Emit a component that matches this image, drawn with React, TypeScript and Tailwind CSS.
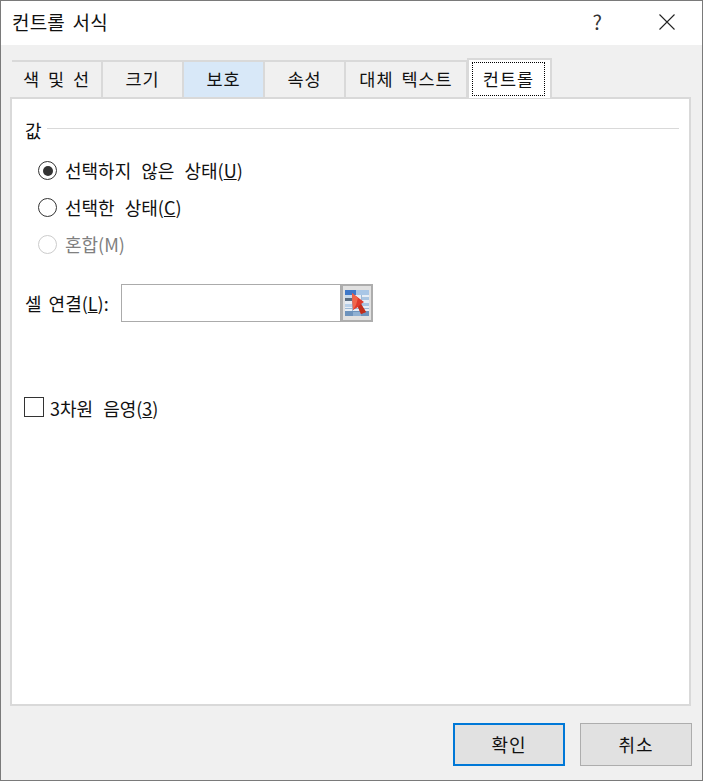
const font = { fontFamily: '"Noto Sans CJK KR", "Noto Sans", sans-serif' }

function Tab({ label, width, active }: { label: string; width: string; active?: boolean }) {
    return (
        <div className={`${width} flex h-[37px] items-center justify-center border-t-2 border-r-2 border-[#d9d9d9] tracking-[1px] [word-spacing:3px] ${active ? 'bg-[#d8e8f8]' : ''}`}>
            {label}
        </div>
    )
}

function Radio({ checked, disabled, children }: { checked?: boolean; disabled?: boolean; children: React.ReactNode }) {
    return (
        <div className={`flex h-[37px] items-center gap-[8px] pl-[26px] ${disabled ? 'text-[#808080]' : ''}`}>
            <div className={`flex size-[19px] items-center justify-center rounded-full border-[1.5px] ${disabled ? 'border-[#cccccc]' : 'border-[#333333]'}`}>
                {checked && <div className="size-[10px] rounded-full bg-[#333333]" />}
            </div>
            <span className="[word-spacing:6px]">{children}</span>
        </div>
    )
}

function CellPickerIcon() {
    return (
        <svg width="24" height="26" viewBox="0 0 24 26">
            <rect x="0" y="0" width="24" height="26" fill="#e6edf5" />
            <rect x="0" y="0" width="11" height="5" fill="#3f78c8" />
            <rect x="11" y="0" width="13" height="5" fill="#a8c6e6" />
            <rect x="0" y="5" width="7" height="3" fill="#c6d9ec" />
            <rect x="0" y="8" width="8" height="3" fill="#5a6c80" />
            <rect x="0" y="14" width="7" height="3" fill="#b8cfe8" />
            <rect x="16" y="7" width="8" height="3" fill="#a9c5e2" />
            <rect x="17" y="13" width="7" height="3" fill="#a9c5e2" />
            <rect x="7" y="5" width="1" height="21" fill="#9db8d4" />
            <rect x="16" y="5" width="1" height="21" fill="#9db8d4" />
            <rect x="0" y="18" width="24" height="1" fill="#9db8d4" />
            <rect x="0" y="21" width="24" height="5" fill="#6d93bd" />
            <rect x="8" y="22" width="8" height="4" fill="#8fb0d2" />
            <path d="M7 3 L19 12 L16 14 L21 22 L16 24 L13 17 L8 20 Z" fill="#e0392a" />
            <path d="M7 3 L13 8 L11 15 L8 20 Z" fill="#f0654a" />
            <path d="M13 17 L16 24 L21 22 L16 14 Z" fill="#bf2f1c" />
        </svg>
    )
}

export default function App() {
    return (
        <div style={font} className="flex h-[781px] w-[703px] flex-col border border-[#7a7a7a] bg-[#f0f0f0] text-[18px] text-[#111111]">
            {/* title bar */}
            <div className="flex h-[44px] shrink-0 items-center bg-white pb-[2px] pl-[11px] pr-[27px]">
                <span className="flex-1 text-[19px] tracking-[0.2px] [word-spacing:3px]">컨트롤 서식</span>
                <span className="mr-[57px] text-[20px] text-[#333333]">?</span>
                <svg width="16" height="16" viewBox="0 0 16 16" stroke="#222222" strokeWidth="1.1" fill="none">
                    <path d="M0.5 0.5 L15.5 15.5 M15.5 0.5 L0.5 15.5" />
                </svg>
            </div>

            {/* tabs */}
            <div className="relative z-10 mt-[13px] ml-[11px] flex shrink-0 items-end text-[17.5px]">
                <div className="flex">
                    <Tab label="색 및 선" width="w-[91px]" />
                    <Tab label="크기" width="w-[81px]" />
                    <Tab label="보호" width="w-[81px]" active />
                    <Tab label="속성" width="w-[81px]" />
                    <Tab label="대체 텍스트" width="w-[122px]" />
                </div>
                <div className="-ml-[1px] -mb-[1px] flex h-[40px] w-[85px] items-center border-x-2 border-t-2 border-[#d9d9d9] bg-white pl-[3px]">
                    <div className="flex h-[34px] w-[73px] items-center justify-center border border-dotted border-black tracking-[1px]">컨트롤</div>
                </div>
            </div>

            {/* panel */}
            <div className="ml-[9px] mr-[11px] flex h-[609px] shrink-0 flex-col border-2 border-[#d9d9d9] bg-white">
                <div className="mt-[18px] ml-[13px] mr-[10px] flex h-[26px] items-center gap-[5px]">
                    <span>값</span>
                    <div className="h-[1px] flex-1 -translate-y-[2px] bg-[#d9d9d9]" />
                </div>
                <div className="mt-[9px]">
                    <Radio checked>선택하지 않은 상태(<u>U</u>)</Radio>
                    <Radio>선택한 상태(<u>C</u>)</Radio>
                    <Radio disabled>혼합(M)</Radio>
                </div>
                <div className="mt-[21px] ml-[13px] flex h-[38px] items-center">
                    <span className="w-[96px] [word-spacing:3px]">셀 연결(<u>L</u>):</span>
                    <div className="h-full w-[220px] border border-[#ababab] bg-white" />
                    <div className="flex h-full w-[32px] items-center justify-center border-2 border-[#adadad] bg-[#e1e1e1]">
                        <CellPickerIcon />
                    </div>
                </div>
                <div className="mt-[70px] ml-[12px] flex items-center gap-[6px]">
                    <div className="size-[20px] border border-[#333333]" />
                    <span className="pt-[3px] [word-spacing:6px]">3차원 음영(<u>3</u>)</span>
                </div>
            </div>

            {/* buttons */}
            <div className="mt-[17px] flex justify-end gap-[15px] pr-[10px]">
                <button className="h-[43px] w-[112px] border-[2px] border-[#0078d7] bg-[#e1e1e1] tracking-[1px]">확인</button>
                <button className="h-[43px] w-[112px] border border-[#adadad] bg-[#e1e1e1] tracking-[1px]">취소</button>
            </div>
        </div>
    )
}
